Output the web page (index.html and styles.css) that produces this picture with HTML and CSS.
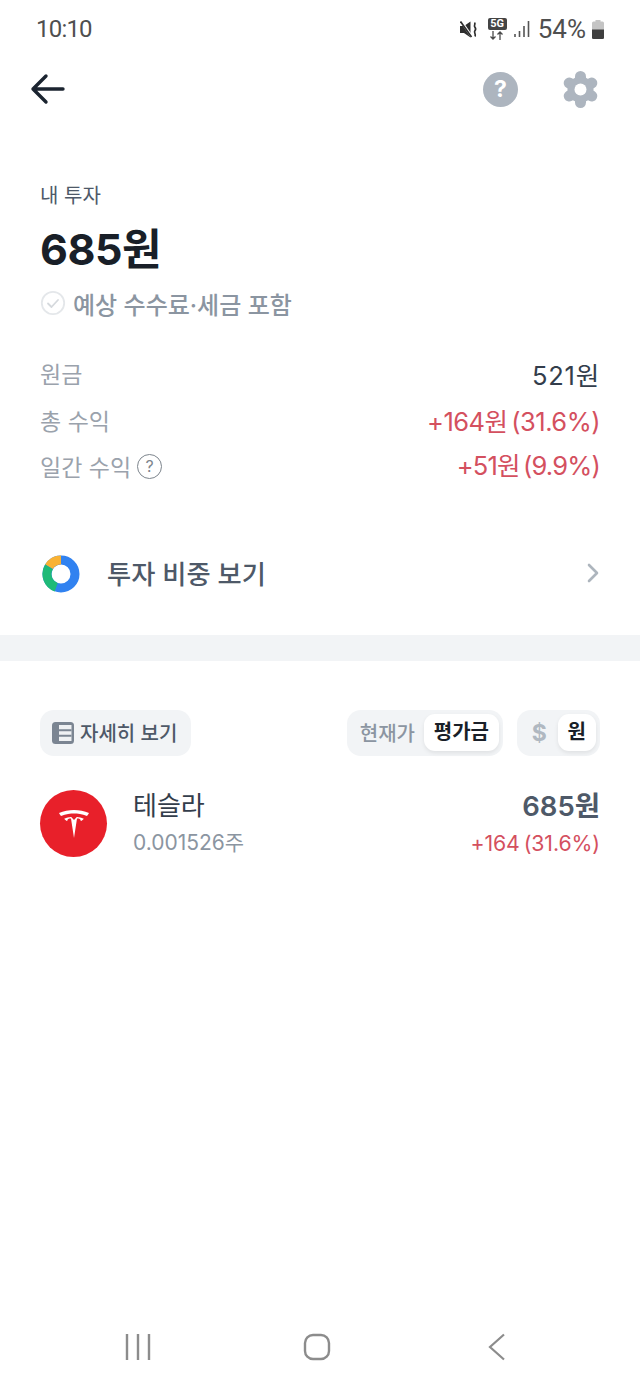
FILE: index.html
```html
<!DOCTYPE html>
<html lang="ko">
<head>
<meta charset="utf-8">
<title>내 투자</title>
<link rel="stylesheet" href="styles.css">
</head>
<body>
<div class="phone">
  <header class="statusbar">
    <span class="clock">10:10</span>
    <div class="status-right">
      <svg class="ic-mute" width="18" height="19" viewBox="0 0 18 19"><path d="M0 6h4L10.500 1.500v16L4 13H0z" fill="#2e2e2e"/><path d="M1 1l11 16" stroke="#fff" stroke-width="2.600"/><path d="M.5 1.500l11 15.500" stroke="#2e2e2e" stroke-width="1.700"/><path d="M13 1.500c1.500 1.500-1 3 .3 4.500s1.200 2.500 0 4 1.500 3 .2 5.500" fill="none" stroke="#2e2e2e" stroke-width="1.700" transform="translate(1.500 1)"/></svg>
      <div class="net">
        <span class="net-5g">5G</span>
        <svg width="16" height="9" viewBox="0 0 16 9"><path d="M4 0v8M1.500 5.500L4 8l2.500-2.500M11 9V1M8.500 3.500L11 1l2.500 2.500" fill="none" stroke="#4a4a4a" stroke-width="1.300"/></svg>
      </div>
      <svg class="ic-signal" width="18" height="18" viewBox="0 0 18 18"><path d="M2 14v3M6.500 11v6M11 6v11M15.500 1v16" stroke="#555" stroke-width="1.600" fill="none"/></svg>
      <span class="pct">54%</span>
      <svg class="ic-batt" width="12" height="19" viewBox="0 0 12 19"><path d="M3.500 0h5v1.500h2a1.500 1.500 0 0 1 1.500 1.500v14.500a1.500 1.500 0 0 1-1.500 1.500h-9A1.500 1.500 0 0 1 0 17.500V3a1.500 1.500 0 0 1 1.500-1.500h2z" fill="#c4c4c4"/><path d="M0 9.500h12v8a1.500 1.500 0 0 1-1.500 1.500h-9A1.500 1.500 0 0 1 0 17.500z" fill="#3f3f3f"/></svg>
    </div>
  </header>

  <nav class="toolbar">
    <svg width="36" height="32" viewBox="0 0 36 32"><path d="M33 16H3M16 3L3 16l13 13" fill="none" stroke="#1b2430" stroke-width="3.400" stroke-linecap="round" stroke-linejoin="round"/></svg>
    <div class="toolbar-right">
      <div class="help-round">?</div>
      <svg width="37" height="37" viewBox="0 0 37 37">
        <g stroke="#adb5bf" stroke-width="11" stroke-linecap="round">
          <path d="M18.500 5.500v26"/>
          <path d="M7.240 12l22.520 13"/>
          <path d="M7.240 25l22.520-13"/>
        </g>
        <circle cx="18.500" cy="18.500" r="13" fill="#adb5bf"/>
        <circle cx="18.500" cy="18.500" r="6" fill="#fff"/>
      </svg>
    </div>
  </nav>

  <section class="summary">
    <div class="eyebrow">내 투자</div>
    <div class="total">685원</div>
    <div class="note">
      <svg width="26" height="26" viewBox="0 0 26 26"><circle cx="13" cy="13" r="11.200" fill="none" stroke="#e4e7ea" stroke-width="1.800"/><path d="M8 13.500l3.500 3.500L18 10" fill="none" stroke="#d5d9dd" stroke-width="1.800" stroke-linecap="round" stroke-linejoin="round"/></svg>
      <span>예상 수수료·세금 포함</span>
    </div>
    <dl class="rows">
      <div class="row"><dt>원금</dt><dd class="dark">521원</dd></div>
      <div class="row"><dt>총 수익</dt><dd class="red">+164원 (31.6%)</dd></div>
      <div class="row"><dt>일간 수익 <span class="q">?</span></dt><dd class="red daily">+51원 (9.9%)</dd></div>
    </dl>
  </section>

  <a class="ratio">
    <svg class="ratio-icon" width="38" height="38" viewBox="0 0 38 38">
      <circle cx="19" cy="19" r="14" fill="none" stroke="#3182f0" stroke-width="9"/>
      <path d="M19 5A14 14 0 0 0 7 11.800" fill="none" stroke="#f9b233" stroke-width="9"/>
      <path d="M7 11.800A14 14 0 0 0 14.200 32.200" fill="none" stroke="#1fba78" stroke-width="9"/>
    </svg>
    <span class="ratio-label">투자 비중 보기</span>
    <svg class="chev" width="14" height="22" viewBox="0 0 14 22"><path d="M3 3l8 8-8 8" fill="none" stroke="#adb5bd" stroke-width="2.600" stroke-linecap="round" stroke-linejoin="round"/></svg>
  </a>

  <div class="divider"></div>

  <div class="controls">
    <div class="chip">
      <svg width="22" height="22" viewBox="0 0 22 22"><rect width="22" height="22" rx="3.500" fill="#7b8592"/><rect x="7" y="3" width="12.500" height="16" fill="#eff1f3"/><path d="M7 8.300h12.500M7 13.700h12.500" stroke="#7b8592" stroke-width="2"/></svg>
      <span>자세히 보기</span>
    </div>
    <div class="toggles">
      <div class="seg seg-wide"><span class="off">현재가</span><span class="on">평가금</span></div>
      <div class="seg seg-narrow"><span class="off dollar">$</span><span class="on">원</span></div>
    </div>
  </div>

  <div class="stock">
    <div class="logo">
      <svg width="30" height="28" viewBox="0 0 30 28"><path fill="#fff" d="M15 28l3-19.500c2.500 0 3.500.5 3.800 2.500 0 0 2-.7 3-2.300-3.500-1.600-7-1.800-7-1.800L15 10l-2.800-3.100s-3.500.2-7 1.800c1 1.600 3 2.300 3 2.300.3-2 1.300-2.500 3.800-2.500z"/><path fill="#fff" d="M15 3.500c3.500 0 8 .5 13 2.500.8-1 1.500-2 2-3-4.500-2-10-3-15-3S4.500 1 0 3c.5 1 1.200 2 2 3 5-2 9.500-2.500 13-2.500z"/></svg>
    </div>
    <div class="stock-info">
      <div class="stock-name">테슬라</div>
      <div class="stock-qty">0.001526주</div>
    </div>
    <div class="stock-val">
      <div class="stock-price">685원</div>
      <div class="stock-gain">+164 (31.6%)</div>
    </div>
  </div>

  <div class="spacer"></div>

  <footer class="navbar">
    <svg width="28" height="26" viewBox="0 0 28 26"><path d="M3 0v26M14 0v26M25 0v26" stroke="#8c8c8c" stroke-width="2.400" fill="none"/></svg>
    <svg class="nav-home" width="28" height="28" viewBox="0 0 28 28"><rect x="2" y="2" width="24" height="24" rx="8" fill="none" stroke="#8c8c8c" stroke-width="2.400"/></svg>
    <svg width="18" height="28" viewBox="0 0 18 28"><path d="M16 1.500L2 14l14 12.500" fill="none" stroke="#8c8c8c" stroke-width="2.200"/></svg>
  </footer>
</div>
</body>
</html>
```

FILE: styles.css
```css
* { box-sizing: border-box; }
html, body { margin: 0; padding: 0; background: #fff; }
body { font-family: Inter, "Noto Sans CJK KR", sans-serif; color: #1b2430; }
.phone { width: 640px; height: 1387px; display: flex; flex-direction: column; overflow: hidden; }

.statusbar { height: 58px; padding: 0 36px; display: flex; align-items: center; justify-content: space-between; color: #4f4f4f; font-family: Roboto, sans-serif; }
.clock { font-size: 24px; letter-spacing: -0.8px; }
.status-right { display: flex; align-items: center; }
.ic-mute { margin-right: 10px; }
.net { width: 19px; margin-right: 6px; display: flex; flex-direction: column; align-items: center; gap: 1px; }
.net-5g { width: 19px; height: 12px; background: #444; color: #fff; font-size: 11px; line-height: 12px; text-align: center; font-weight: 700; border-radius: 2px; }
.ic-signal { margin-right: 7px; }
.pct { font-size: 26px; margin-right: 6px; }

.toolbar { height: 62px; padding: 0 41px 0 30px; display: flex; align-items: center; justify-content: space-between; }
.toolbar-right { display: flex; align-items: center; gap: 44px; }
.help-round { width: 35px; height: 35px; border-radius: 50%; background: #adb5bf; color: #fff; font-weight: 700; font-size: 23px; line-height: 35px; text-align: center; }

.summary { padding: 62px 40px 0; }
.eyebrow { font-size: 20px; line-height: 28px; color: #4e5968; }
.total { margin-top: 13px; font-size: 43px; font-weight: 700; line-height: 52px; color: #191f28; letter-spacing: -0.5px; }
.note { margin-top: 10px; display: flex; align-items: center; gap: 7px; height: 36px; color: #8b95a1; font-size: 24px; font-weight: 500; }
.rows { margin: 29px 0 0; display: flex; flex-direction: column; }
.row { height: 46.500px; display: flex; align-items: center; justify-content: space-between; }
.row dt { font-size: 23px; color: #9aa2ac; display: flex; align-items: center; gap: 6px; }
.row dd { margin: 0; font-size: 25.500px; letter-spacing: -0.5px; word-spacing: -3px; }
.q { width: 25px; height: 25px; border: 1.500px solid #7d858d; border-radius: 50%; color: #7d858d; font-size: 16px; line-height: 22px; text-align: center; }
.row .dark { color: #333d4b; letter-spacing: 0.8px; }
.red { color: #d4505f; }
.row .daily { letter-spacing: -0.8px; margin-bottom: 6px; }

.ratio { margin-top: 38px; height: 90px; padding: 0 40px; display: flex; align-items: center; }
.ratio-icon { margin: 2px 0 0 2px; }
.ratio-label { margin-left: 27px; flex: 1; font-size: 26.250px; font-weight: 500; color: #4e5968; }

.divider { margin-top: 17px; height: 26px; background: #f2f4f6; }

.controls { margin-top: 49px; padding: 0 40px; display: flex; align-items: center; justify-content: space-between; }
.chip { width: 151px; height: 46px; border-radius: 14px; background: #f2f4f6; display: flex; align-items: center; padding-left: 12px; gap: 6px; color: #4e5968; font-size: 20px; font-weight: 500; }
.toggles { display: flex; gap: 14px; }
.seg { height: 46px; border-radius: 14px; background: #f2f4f6; padding: 4px; display: flex; align-items: center; font-size: 20px; font-weight: 500; }
.seg-wide { width: 156px; }
.seg-narrow { width: 83px; }
.off { flex: 1; text-align: center; color: #8b95a1; }
.dollar { color: #b0b8c1; font-size: 23px; font-weight: 700; }
.on { height: 37px; line-height: 37px; padding: 0 10px; background: #fff; border-radius: 11px; color: #191f28; font-weight: 700; box-shadow: 0 2px 4px rgba(0, 0, 0, 0.08); }

.stock { margin-top: 34px; padding: 0 40px; display: flex; align-items: center; height: 68px; }
.logo { width: 67px; height: 67px; border-radius: 50%; background: #e8202a; display: flex; align-items: center; justify-content: center; }
.stock-info { margin-left: 26px; flex: 1; }
.stock-name { font-size: 26px; line-height: 32px; color: #333d4b; }
.stock-qty { margin-top: 7px; font-size: 21px; line-height: 28px; color: #8b95a1; }
.stock-val { text-align: right; }
.stock-price { font-size: 27.500px; font-weight: 600; line-height: 32px; color: #4e5968; }
.stock-gain { margin-top: 7px; font-size: 21.300px; line-height: 28px; color: #d4505f; letter-spacing: -0.1px; word-spacing: -2px; }

.spacer { flex: 1; }
.navbar { height: 80px; padding: 0 134px 0 124px; display: flex; align-items: center; justify-content: space-between; }
.nav-home { margin-right: 6px; }
```
